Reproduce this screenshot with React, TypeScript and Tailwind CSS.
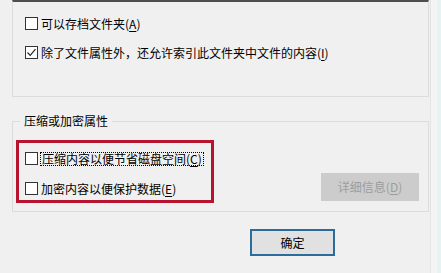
import React from "react";

const font = { fontFamily: '"Noto Sans CJK SC", "Noto Sans", sans-serif' };

function Box({ checked }: { checked?: boolean }) {
  return (
    <span className="flex h-[13px] w-[13px] shrink-0 items-center justify-center border border-[#333] bg-white">
      {checked && (
        <svg width="11" height="11" viewBox="0 0 11 11">
          <polyline points="1.5,5.5 4.2,8.3 9.5,2.2" fill="none" stroke="#222" strokeWidth="1.2" />
        </svg>
      )}
    </span>
  );
}

function Key({ k }: { k: string }) {
  return (
    <>
      (<span className="underline underline-offset-2">{k}</span>)
    </>
  );
}

export default function App() {
  return (
    <div
      className="flex h-[273px] w-[441px] overflow-hidden bg-[#f0f0f0] text-[12px] leading-[16px] text-black"
      style={font}
    >
      <div className="w-[430px] shrink-0 pl-[12px]">
        {/* upper group */}
        <div className="flex h-[97px] w-[417px] flex-col gap-[16px] border-x border-b border-t-2 border-[#dcdcdc] border-t-[#4e4e4e] pl-[12px] pt-[15px]">
          <label className="flex h-[13px] items-center gap-[3px]">
            <Box />
            <span>
              可以存档文件夹<Key k="A" />
            </span>
          </label>
          <label className="flex h-[13px] items-center gap-[3px]">
            <Box checked />
            <span>
              除了文件属性外，还允许索引此文件夹中文件的内容<Key k="I" />
            </span>
          </label>
        </div>

        {/* compress / encrypt group */}
        <fieldset className="mt-[16px] w-[417px] border border-[#dcdcdc] pb-[8px] pl-[3px]">
          <legend className="ml-[4px] px-[4px] leading-[16px]">压缩或加密属性</legend>
          <div className="mt-[11px] flex">
            <div className="flex h-[63px] w-[198px] flex-col gap-[17px] border-[3px] border-[#b8132f] pl-[6px] pt-[9px]">
              <label className="flex h-[13px] items-center gap-[2px]">
                <Box />
                <span className="border border-dotted border-black px-[1px] leading-[12px]">
                  压缩内容以便节省磁盘空间<Key k="C" />
                </span>
              </label>
              <label className="flex h-[13px] items-center gap-[3px]">
                <Box />
                <span>
                  加密内容以便保护数据<Key k="E" />
                </span>
              </label>
            </div>
            <button className="mb-[2px] ml-auto mr-[9px] h-[28px] w-[98px] self-end bg-[#cccccc] text-[#9d9d9d]">
              详细信息<Key k="D" />
            </button>
          </div>
        </fieldset>

        <button className="ml-[238px] mt-[17px] h-[27px] w-[85px] border-2 border-[#2c6c9c] bg-[#e1e1e1] text-black">
          确定
        </button>
      </div>
      <div className="flex-1 border-l border-[#e4e4e4] bg-[#f4f4f4]">
        <div className="ml-auto h-full w-[4px] bg-[#e6f3f3]" />
      </div>
    </div>
  );
}
